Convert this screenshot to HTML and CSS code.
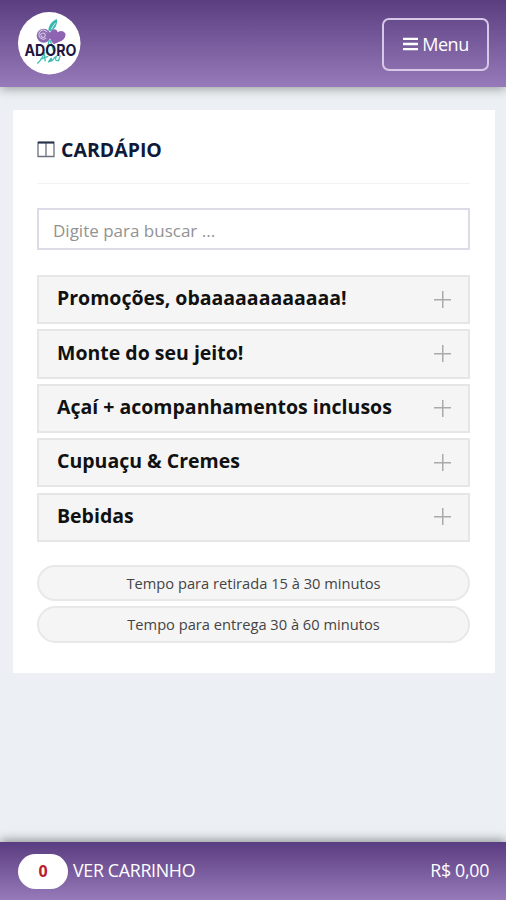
FILE: index.html
```html
<!DOCTYPE html>
<html lang="pt-BR">
<head>
<meta charset="utf-8">
<title>Cardápio</title>
<link rel="stylesheet" href="styles.css">
</head>
<body>
<header class="topbar">
  <svg class="logo" viewBox="0 0 62 62" role="img">
    <circle cx="31" cy="31" r="31" fill="#fff"/>
    <path d="M30 18C31 12 34 9 38.500 7C39.500 12 37 17 32 19Z" fill="#38b9b0"/>
    <path d="M33 17L37 11" stroke="#fff" stroke-width=".8"/>
    <circle cx="25.500" cy="23.500" r="7" fill="#8d6bb0"/>
    <path d="M29 20a4.500 4.500 0 1 0-1 6M22 23c1-3 5-3 5 0s-4 3-4 0" fill="none" stroke="#d9c9e8" stroke-width="1"/>
    <path d="M36 32C29 26 31 17 36 17Q38.500 17 39.500 20C44 17 49 21 46.500 25C44 30 40 29 36 32Z" fill="#8d63b2"/>
    <path d="M19 51C23 48 25 44 26 40L27 49M22 47L30 44M30 50C34 43 34 47 32 49C35 49 35 45 38 44C36 49 39 49 41 47M42 43L40 49M31 28L28 41M32 28L36 41" fill="none" stroke="#42bdb5" stroke-width="1.300"/>
    <text class="logo-word" x="6.500" y="43.500" textLength="51.500" lengthAdjust="spacingAndGlyphs">ADORO</text>
  </svg>
  <button class="menu">
    <svg class="bars" viewBox="0 0 16 14"><path d="M0 1.500H16M0 7H16M0 12.500H16"/></svg>
    <span class="menu-label">Menu</span>
  </button>
</header>
<main class="card">
  <h1 class="title">
    <svg class="book" viewBox="0 0 18 17"><path d="M1 1.500H17V15.500H1ZM9 2V15"/><path class="book-top" d="M1 1.500H17"/></svg>
    <span class="title-text">CARDÁPIO</span>
  </h1>
  <input class="search" type="text" placeholder="Digite para buscar ...">
  <div class="list">
    <div class="row"><span>Promoções, obaaaaaaaaaaaa!</span><i class="plus"></i></div>
    <div class="row"><span>Monte do seu jeito!</span><i class="plus"></i></div>
    <div class="row"><span>Açaí + acompanhamentos inclusos</span><i class="plus"></i></div>
    <div class="row"><span>Cupuaçu &amp; Cremes</span><i class="plus"></i></div>
    <div class="row"><span>Bebidas</span><i class="plus"></i></div>
  </div>
  <div class="times">
    <div class="pill"><span>Tempo para retirada 15 à 30 minutos</span></div>
    <div class="pill"><span>Tempo para entrega 30 à 60 minutos</span></div>
  </div>
</main>
<footer class="cart">
  <span class="count">0</span>
  <span class="cart-label">VER CARRINHO</span>
  <span class="total">R$ 0,00</span>
</footer>
</body>
</html>
```
FILE: styles.css
```css
* { box-sizing: border-box; }
body {
  margin: 0;
  height: 900px;
  display: flex;
  flex-direction: column;
  overflow: hidden;
  background: #ecf0f4;
  font-family: "Open Sans", sans-serif;
}
.topbar {
  height: 87px;
  flex: none;
  display: flex;
  justify-content: space-between;
  align-items: flex-start;
  padding: 12px 17px 0 18px;
  background: linear-gradient(#5a3e80, #967ab9);
  box-shadow: 0 2px 10px rgba(0, 0, 0, .35);
}
.logo { width: 62.500px; height: 62.500px; overflow: visible; }
.logo-word { font: 700 15.500px Inter, sans-serif; fill: #21163f; }
.menu {
  width: 107px;
  height: 53px;
  margin-top: 6px;
  padding: 0 0 1px 1px;
  display: flex;
  align-items: center;
  justify-content: center;
  gap: 4px;
  border: 2px solid #d6c8e6;
  border-radius: 7px;
  background: transparent;
  color: #fff;
  font: 500 18px/24px "Open Sans", sans-serif;
  letter-spacing: -.5px;
}
.bars { width: 15px; height: 14px; stroke: #fff; stroke-width: 2.500; }
.card {
  width: 482px;
  height: 563px;
  flex: none;
  margin: 23px 0 0 12.500px;
  padding: 24px 24.500px 0;
  background: #fff;
}
.title {
  display: flex;
  align-items: center;
  height: 50px;
  margin: 0;
  padding-bottom: 18px;
  border-bottom: 1.500px solid #f2f2f5;
  gap: 6px;
  color: #0f1a38;
  font-size: 19.500px;
  line-height: 26px;
  font-weight: 700;
}
.book { width: 18px; height: 17px; fill: none; stroke: #6b717d; stroke-width: 1.300; }
.book .book-top { stroke: #25324c; stroke-width: 2; }
.search {
  display: block;
  width: 100%;
  height: 42px;
  margin: 24px 0 25px;
  padding: 2px 14px 0;
  border: 2px solid #dcdce9;
  background: #fff;
  font: 17px "Open Sans", sans-serif;
}
.search::placeholder { color: #929292; opacity: 1; }
.list { display: grid; gap: 5.200px; }
.row {
  height: 49.200px;
  display: flex;
  align-items: center;
  justify-content: space-between;
  padding: 0 17px 2.500px 18px;
  border: 2px solid #e6e6e6;
  background: #f5f5f5;
  color: #111;
  font-size: 19.500px;
  line-height: 26px;
  font-weight: 700;
  white-space: nowrap;
}
.plus {
  width: 17px;
  height: 17px;
  margin-top: 2px;
  background:
    linear-gradient(#aaa, #aaa) center / 17px 1.500px no-repeat,
    linear-gradient(#aaa, #aaa) center / 1.500px 17px no-repeat;
}
.times { display: grid; gap: 5px; margin-top: 23.500px; }
.pill {
  height: 36.200px;
  display: flex;
  align-items: center;
  justify-content: center;
  padding-bottom: 1px;
  border: 2px solid #e8e8e8;
  border-radius: 19px;
  background: #f5f5f5;
  color: #444;
  font-size: 14.660px;
}
.cart {
  height: 58px;
  flex: none;
  display: flex;
  align-items: center;
  margin-top: auto;
  padding: 0 17px 0 18px;
  background: linear-gradient(#5a3c80, #967ab9);
  box-shadow: 0 -2px 10px rgba(0, 0, 0, .4);
  color: #fff;
  font-size: 17.800px;
  line-height: 23px;
  letter-spacing: -.3px;
}
.count {
  width: 50px;
  height: 35px;
  display: grid;
  place-items: center;
  border-radius: 18px;
  background: #fff;
  color: #b9212b;
  font-size: 16px;
  font-weight: 700;
}
.cart-label { margin: 0 0 1px 5px; }
.total { margin: 0 0 1px auto; }
```
